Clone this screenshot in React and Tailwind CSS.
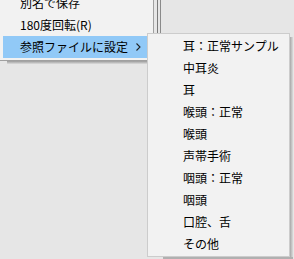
import React from "react";

const mainItems = ["別名で保存", "180度回転(R)"];

const subItems = [
  "耳：正常サンプル",
  "中耳炎",
  "耳",
  "喉頭：正常",
  "喉頭",
  "声帯手術",
  "咽頭：正常",
  "咽頭",
  "口腔、舌",
  "その他",
];

const font = { fontFamily: '"Noto Sans CJK JP", "Noto Sans", sans-serif' };

export default function App() {
  return (
    <div
      className="relative w-[294px] h-[259px] overflow-hidden bg-[#e6e6e6] text-[12px] text-black"
      style={font}
    >
      {/* window lines behind the menus */}
      <div className="absolute left-[157px] top-0 w-px h-[60px] bg-[#7a7a7a]" />
      <div className="absolute left-[160px] top-0 w-px h-[60px] bg-[#8a8a8a]" />

      {/* main context menu */}
      <div className="absolute left-0 top-0 w-[154px] h-[61px] bg-[#f2f2f2] border-r border-b border-[#a0a0a0] flex flex-col justify-end pb-[2px] overflow-hidden">
        {mainItems.map((t) => (
          <div key={t} className="h-[22px] shrink-0 flex items-center pl-[20px] leading-none">
            {t}
          </div>
        ))}
        <div className="h-[22px] shrink-0 ml-[3px] mr-[5px] bg-[#91c9f7] flex items-center pl-[17px] pr-[6px] leading-none">
          <span className="flex-1">参照ファイルに設定</span>
          <svg width="5" height="8" viewBox="0 0 5 8" className="mr-[1px]">
            <polyline points="0.5,0.5 4,4 0.5,7.5" fill="none" stroke="#222" strokeWidth="1.1" />
          </svg>
        </div>
      </div>
      <div className="absolute left-[7px] top-[61px] w-[147px] h-[3px] bg-gradient-to-b from-[#9a9a9a] to-[#dcdcdc]" />

      {/* submenu */}
      <div className="absolute left-[147px] top-[33px] w-[143px] h-[224px] bg-[#f2f2f2] border border-[#cccccc] py-[1px]">
        {subItems.map((t) => (
          <div key={t} className="h-[22px] flex items-center pl-[35px] leading-none whitespace-nowrap">
            {t}
          </div>
        ))}
      </div>
      <div className="absolute left-[290px] top-[37px] w-[3px] h-[222px] bg-gradient-to-r from-[#a8a8a8] to-[#dcdcdc]" />
      <div className="absolute left-[163px] top-[257px] w-[130px] h-[2px] bg-[#b0b0b0]" />
    </div>
  );
}
